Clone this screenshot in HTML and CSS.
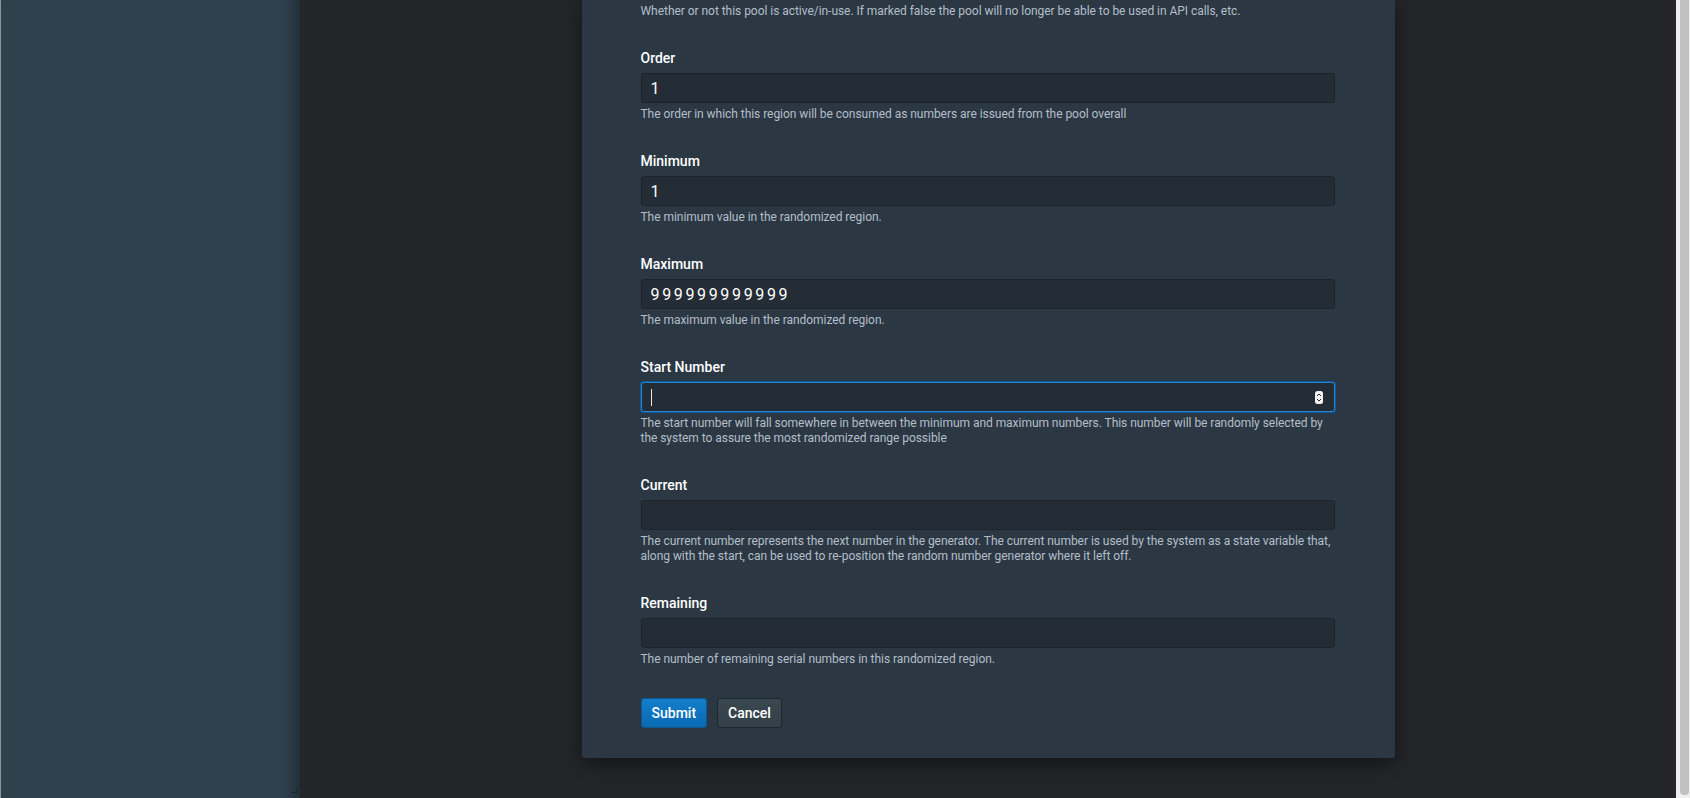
FILE: index.html
```html
<!DOCTYPE html>
<html lang="en">
<head>
    <meta charset="UTF-8">
    <meta name="viewport" content="width=device-width, initial-scale=1.0">
    <title>Edit Region</title>
    <link rel="stylesheet" href="styles.css">
</head>
<body>
    <div class="app">
        <aside class="sidebar">
            <span class="grip"></span>
        </aside>

        <main class="main">
            <div class="modal">
                <form class="region-form">
                    <p class="help help-lead">Whether or not this pool is active/in-use. If marked false the pool will no longer be able to be used in API calls, etc.</p>

                    <div class="field">
                        <label for="order">Order</label>
                        <input type="text" id="order" class="input" value="1">
                        <p class="help">The order in which this region will be consumed as numbers are issued from the pool overall</p>
                    </div>

                    <div class="field">
                        <label for="minimum">Minimum</label>
                        <input type="text" id="minimum" class="input" value="1">
                        <p class="help">The minimum value in the randomized region.</p>
                    </div>

                    <div class="field">
                        <label for="maximum">Maximum</label>
                        <input type="text" id="maximum" class="input" value="999999999999">
                        <p class="help">The maximum value in the randomized region.</p>
                    </div>

                    <div class="field">
                        <label for="start">Start Number</label>
                        <div class="input-wrap">
                            <input type="text" id="start" class="input is-focused">
                            <span class="caret"></span>
                            <svg class="spinner" width="8" height="13" viewBox="0 0 8 13">
                                <rect x="0" y="0" width="8" height="13" rx="2.5" fill="#f2f2f2"/>
                                <path d="M2 5 L4 3 L6 5" fill="none" stroke="#2a2a2a" stroke-width="1"/>
                                <path d="M2 8 L4 10 L6 8" fill="none" stroke="#2a2a2a" stroke-width="1"/>
                            </svg>
                        </div>
                        <p class="help">The start number will fall somewhere in between the minimum and maximum numbers. This number will be randomly selected by the system to assure the most randomized range possible</p>
                    </div>

                    <div class="field">
                        <label for="current">Current</label>
                        <input type="text" id="current" class="input">
                        <p class="help">The current number represents the next number in the generator. The current number is used by the system as a state variable that, along with the start, can be used to re-position the random number generator where it left off.</p>
                    </div>

                    <div class="field">
                        <label for="remaining">Remaining</label>
                        <input type="text" id="remaining" class="input">
                        <p class="help">The number of remaining serial numbers in this randomized region.</p>
                    </div>

                    <div class="actions">
                        <button type="button" class="btn btn-primary">Submit</button>
                        <button type="button" class="btn btn-default">Cancel</button>
                    </div>
                </form>
            </div>
        </main>

        <div class="scrollbar">
            <div class="thumb"></div>
        </div>
    </div>
</body>
</html>
```

FILE: styles.css
```css
body {
    margin: 0;
    padding: 0;
    background: #232529;
    font-family: 'Roboto', 'Liberation Sans', sans-serif;
    overflow: hidden;
}

.app {
    display: flex;
    height: 100vh;
}

/* left navigation panel (collapsed content) */
.sidebar {
    position: relative;
    flex: none;
    width: 300px;
    box-sizing: border-box;
    background: #30414e;
    border-left: 1px solid #8e959b;
    box-shadow: inset -20px 0 18px -16px rgba(0, 0, 0, 0.4);
}

.grip {
    position: absolute;
    right: 3px;
    bottom: 5px;
    width: 5px;
    height: 4px;
    border-right: 1px solid #1b252e;
    border-bottom: 1px solid #1b252e;
}

.main {
    flex: 1;
    overflow: hidden;
}

.modal {
    width: 813px;
    margin: 0 auto;
    box-sizing: border-box;
    padding: 4px 60px 30px 59px;
    background: #2b3844;
    border-radius: 0 0 3px 3px;
    box-shadow: 0 6px 18px rgba(0, 0, 0, 0.45);
}

.help {
    margin: 4px 0 0;
    font-size: 12px;
    line-height: 15px;
    letter-spacing: -0.04px;
    color: #b4bec8;
}

.help-lead {
    margin: 0 0 29px;
}

.field {
    margin-bottom: 29px;
}

label {
    display: block;
    margin-bottom: 5px;
    font-size: 14px;
    font-weight: 500;
    line-height: 20px;
    color: #fff;
}

.input {
    display: block;
    width: 100%;
    height: 30px;
    box-sizing: border-box;
    padding: 0 9px;
    background: #242c35;
    border: 1px solid #1c232a;
    border-radius: 3px;
    color: #fff;
    font-family: 'Roboto', sans-serif;
    font-size: 16px;
    letter-spacing: 2.65px;
    outline: none;
}

.input-wrap {
    position: relative;
}

.input.is-focused {
    border-color: #2585d0;
    box-shadow: 0 0 0 1px #0d5a9a;
}

.caret {
    position: absolute;
    left: 10px;
    top: 7px;
    width: 1px;
    height: 17px;
    background: #e6e6e6;
}

.spinner {
    position: absolute;
    right: 12px;
    top: 9px;
}

.actions {
    display: flex;
    gap: 10px;
    padding-top: 2px;
}

.btn {
    height: 30px;
    padding: 0 10px;
    border-radius: 3px;
    border: 1px solid;
    font-family: 'Roboto', sans-serif;
    font-size: 14px;
    font-weight: 500;
    color: #fff;
    cursor: pointer;
}

.btn-primary {
    background: linear-gradient(#137ecb, #0a69b3);
    border-color: #0b5893;
}

.btn-default {
    background: linear-gradient(#39474f, #334049);
    border-color: #1f272d;
}

/* window scrollbar on the right edge */
.scrollbar {
    flex: none;
    display: flex;
    width: 14px;
    box-sizing: border-box;
    padding: 0 1px 3px 4px;
    background: #efefef;
}

.thumb {
    flex: 1;
    background: #c1c1c1;
    border-radius: 0 0 4px 4px;
}
```
